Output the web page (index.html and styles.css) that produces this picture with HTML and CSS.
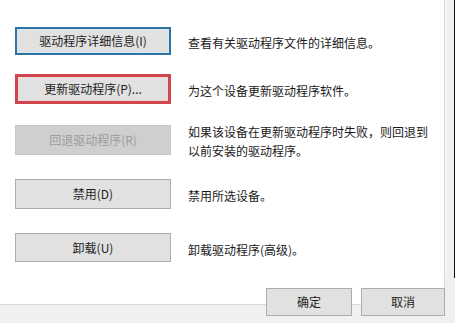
FILE: index.html
```html
<!DOCTYPE html>
<html lang="zh-CN">
<head>
<meta charset="utf-8">
<title>驱动程序</title>
<link rel="stylesheet" href="styles.css">
</head>
<body>
<div class="window">
  <div class="top">
    <div class="panel">
      <div class="row">
        <button class="btn btn-focus">驱动程序详细信息(I)</button>
        <p class="desc">查看有关驱动程序文件的详细信息。</p>
      </div>
      <div class="row">
        <button class="btn btn-marked">更新驱动程序(P)...</button>
        <p class="desc">为这个设备更新驱动程序软件。</p>
      </div>
      <div class="row row-tight">
        <button class="btn btn-disabled" disabled>回退驱动程序(R)</button>
        <p class="desc">如果该设备在更新驱动程序时失败，则回退到<br>以前安装的驱动程序。</p>
      </div>
      <div class="row">
        <button class="btn">禁用(D)</button>
        <p class="desc">禁用所选设备。</p>
      </div>
      <div class="row row-loose">
        <button class="btn btn-short">卸载(U)</button>
        <p class="desc">卸载驱动程序(高级)。</p>
      </div>
    </div>
    <div class="edge"></div>
  </div>
  <div class="footer">
    <button class="btn btn-ok">确定</button>
    <button class="btn btn-cancel">取消</button>
  </div>
</div>
</body>
</html>
```

FILE: styles.css
```css
html, body {
  margin: 0;
  padding: 0;
  background: #f0f0f0;
}

.window {
  width: 455px;
  height: 323px;
  overflow: hidden;
  background: #f0f0f0;
  font-family: "Noto Sans CJK SC", "Microsoft YaHei", sans-serif;
  font-size: 12px;
  color: #1a1a1a;
}

.top {
  display: flex;
  height: 278px;
}

.panel {
  width: 444px;
  height: 277px;
  background: #ffffff;
  border-right: 1px solid #d9d9d9;
  border-bottom: 1px solid #d9d9d9;
  padding: 27px 0 0 15px;
  box-sizing: content-box;
  display: flex;
  flex-direction: column;
  width: 429px;
}

.edge {
  flex: 1;
  background: #f0f0f0;
  border-left: 2px solid #f7f7f7;
  border-right: 1px solid #111111;
}

.row {
  display: flex;
  align-items: center;
  gap: 17px;
}

.row + .row {
  margin-top: 19px;
}

.row + .row-tight {
  margin-top: 15px;
}

.row + .row-loose {
  margin-top: 24px;
}

.desc {
  margin: 0;
  padding-top: 3px;
  line-height: 19px;
  white-space: nowrap;
}

.btn {
  font-family: inherit;
  font-size: 12px;
  color: #1e1e1e;
  width: 156px;
  height: 30px;
  margin: 0;
  padding: 0;
  background: #e1e1e1;
  border: 1px solid #adadad;
  box-sizing: border-box;
  line-height: 1;
  flex: none;
}

.btn-focus {
  height: 28px;
  border: 2px solid #2f75a0;
  box-shadow: inset 0 0 0 1px #d3e8f6;
}

.btn-marked {
  border: 3px solid #d0464f;
  box-shadow: inset 0 0 0 1px #f0d6d6;
}

.btn-disabled {
  background: #cfcfcf;
  border-color: #c6c6c6;
  color: #9d9d9d;
}

.btn-short {
  height: 29px;
}

.footer {
  display: flex;
  justify-content: flex-end;
  gap: 9px;
  padding: 10px 10px 0 0;
}

.btn-ok {
  width: 86px;
  height: 28px;
}

.btn-cancel {
  width: 84px;
  height: 28px;
}
```
